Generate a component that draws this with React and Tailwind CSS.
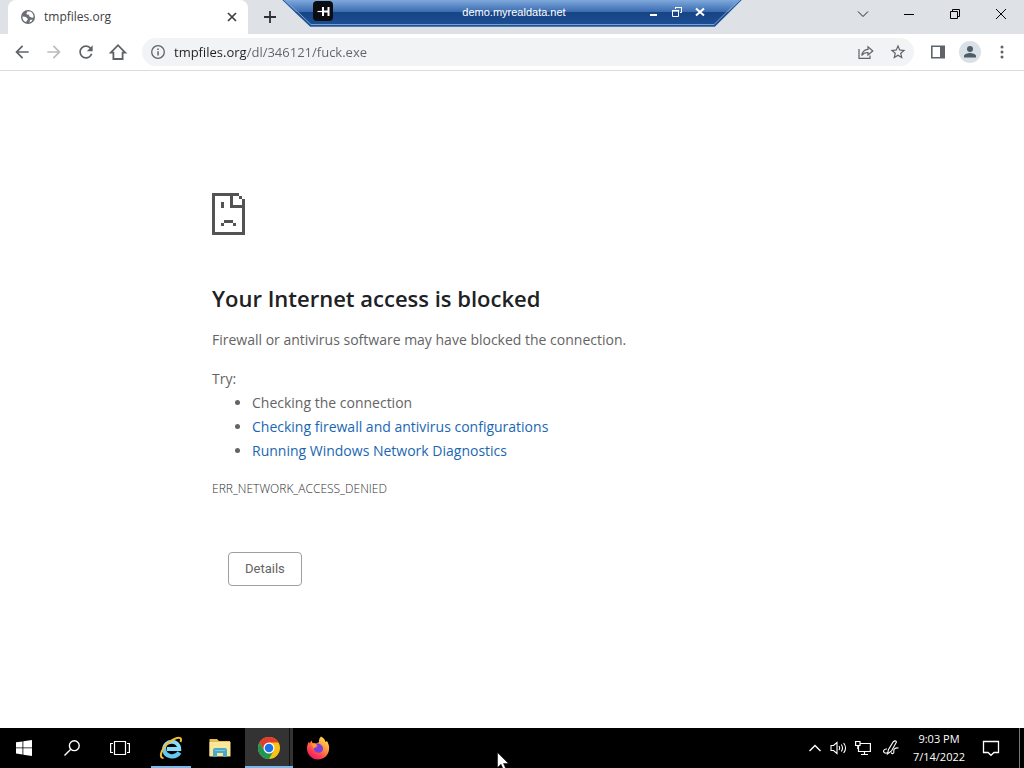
import React from "react";

function IconButton({ label, className = "", children }) {
  return (
    <button type="button" aria-label={label} className={`flex shrink-0 items-center justify-center ${className}`}>
      {children}
    </button>
  );
}

function Material({ d, className = "size-5 fill-[#5f6368]" }) {
  return (
    <svg viewBox="0 0 24 24" className={className} aria-hidden="true">
      <path d={d} />
    </svg>
  );
}

function SessionBar() {
  return (
    <div className="absolute left-1/2 top-0 h-[27px] w-[460px] -translate-x-1/2">
      <svg viewBox="0 0 460 27" className="absolute inset-0 size-full" aria-hidden="true">
        <defs>
          <linearGradient id="barFill" x1="0" y1="0" x2="0" y2="1">
            <stop offset="0" stopColor="#7fa9dc" />
            <stop offset="0.45" stopColor="#3a6bb0" />
            <stop offset="0.46" stopColor="#174585" />
            <stop offset="1" stopColor="#1c4f96" />
          </linearGradient>
        </defs>
        <path d="M0 0H460L433 26.500H28Z" fill="url(#barFill)" />
        <path d="M1 0L28.500 26H433L459 0" fill="none" stroke="#1e5a9c" />
        <path d="M3 0L29 24.500H432L457 0" fill="none" stroke="#7f9fcc" />
      </svg>
      <div className="relative flex h-6 items-center pl-[31px] pr-8">
        <IconButton label="Pin the connection bar" className="mb-0.5 size-5 rounded-sm bg-[#0b0d10]">
          <svg viewBox="0 0 20 20" className="size-5" fill="none" stroke="#fff" strokeWidth="2" aria-hidden="true">
            <path d="M4.500 10.500H9" strokeWidth="1.200" />
            <path d="M10 6V15M10 10.500H15M15.500 6V15" />
          </svg>
        </IconButton>
        <span className="flex-1 pl-[52px] text-center font-['Liberation_Sans',sans-serif] text-[11px] leading-4 text-white">
          demo.myrealdata.net
        </span>
        <div className="flex gap-0.5">
          <IconButton label="Minimize session" className="h-6 w-[21px]">
            <svg viewBox="0 0 12 12" className="size-3" aria-hidden="true"><path d="M2 8H9V10H2Z" fill="#fff" /></svg>
          </IconButton>
          <IconButton label="Restore session" className="h-6 w-[21px]">
            <svg viewBox="0 0 12 12" className="size-3" fill="none" stroke="#fff" aria-hidden="true">
              <path d="M1.500 5H7.500V10.500H1.500ZM1 4.500H8M4.500 3V1.500H10.500V6.500H9M4 1.500H11" />
            </svg>
          </IconButton>
          <IconButton label="Close session" className="h-6 w-[21px]">
            <svg viewBox="0 0 12 12" className="size-3" fill="none" stroke="#fff" strokeWidth="2" aria-hidden="true">
              <path d="M2 2.500L10 9.500M10 2.500L2 9.500" />
            </svg>
          </IconButton>
        </div>
      </div>
    </div>
  );
}

function TabStrip() {
  return (
    <div className="relative flex h-[34px] bg-[#dee1e6]">
      <div className="ml-2 flex w-60 items-center rounded-t-lg bg-white pl-3 pr-2">
        <svg viewBox="0 0 16 16" className="size-4 shrink-0" aria-hidden="true">
          <circle cx="8" cy="8" r="7" fill="#6b6f73" />
          <path d="M2.500 7.500C4.500 7.200 6.500 8 7.500 9.500C8.500 10.500 7 11 6.500 12.500L5.500 13C3.500 12 2.200 10 2.500 7.500ZM7 2.500H10.500C12.500 3.500 13.500 5.500 13.600 8C12.500 9.500 11.500 8.500 10.500 8C9 7.500 8.500 6.800 9.500 6C8.500 5.500 7 6 6.500 5C6 4 7.500 3.500 7 2.500ZM10 11L12.500 10.500C12 12 11 13 9.500 13.500Z" fill="#fff" />
        </svg>
        <span className="ml-2 flex-1 text-xs text-[#3c4043]">tmpfiles.org</span>
        <IconButton label="Close tab" className="size-4">
          <svg viewBox="0 0 16 16" className="size-4" stroke="#3c4043" strokeWidth="1.700" aria-hidden="true">
            <path d="M4 4L12 12M12 4L4 12" />
          </svg>
        </IconButton>
      </div>
      <IconButton label="New tab" className="ml-2 w-7">
        <svg viewBox="0 0 16 16" className="size-4" stroke="#303134" strokeWidth="1.800" aria-hidden="true">
          <path d="M8 2V14M2 8H14" />
        </svg>
      </IconButton>
      <div className="ml-auto flex h-7">
        <IconButton label="Search tabs" className="w-[46px]">
          <svg viewBox="0 0 12 12" className="size-3" fill="none" stroke="#202124" aria-hidden="true"><path d="M1 3.500L6 8.500L11 3.500" /></svg>
        </IconButton>
        <IconButton label="Minimize" className="w-[46px]">
          <svg viewBox="0 0 10 10" className="size-2.5" stroke="#000" aria-hidden="true"><path d="M0 5.500H10" /></svg>
        </IconButton>
        <IconButton label="Restore" className="w-[46px]">
          <svg viewBox="0 0 10 10" className="size-2.5" fill="none" stroke="#000" aria-hidden="true">
            <path d="M0.500 2.500H7.500V9.500H0.500ZM2.500 2.500V0.500H9.500V7.500H7.500" />
          </svg>
        </IconButton>
        <IconButton label="Close" className="w-[46px]">
          <svg viewBox="0 0 10 10" className="size-2.5" stroke="#000" aria-hidden="true"><path d="M0 0L10 10M10 0L0 10" /></svg>
        </IconButton>
      </div>
      <SessionBar />
    </div>
  );
}

function Toolbar() {
  return (
    <div className="flex h-[37px] items-center border-b border-[#dadce0] bg-white px-1.5">
      <IconButton label="Back" className="h-8 w-8">
        <Material d="M20 11H7.830l5.590-5.590L12 4l-8 8 8 8 1.410-1.410L7.830 13H20v-2z" />
      </IconButton>
      <IconButton label="Forward" className="h-8 w-8">
        <Material className="size-5 fill-[#babcbe]" d="M12 4l-1.410 1.410L16.170 11H4v2h12.170l-5.580 5.590L12 20l8-8z" />
      </IconButton>
      <IconButton label="Reload" className="h-8 w-8">
        <Material d="M17.650 6.350C16.200 4.900 14.210 4 12 4c-4.420 0-7.990 3.580-7.990 8s3.570 8 7.990 8c3.730 0 6.840-2.550 7.730-6h-2.080c-.82 2.330-3.040 4-5.650 4-3.310 0-6-2.690-6-6s2.690-6 6-6c1.660 0 3.140.69 4.220 1.780L13 11h7V4l-2.350 2.350z" />
      </IconButton>
      <IconButton label="Home" className="h-8 w-8">
        <svg viewBox="0 0 20 20" className="size-5" fill="none" stroke="#5f6368" strokeWidth="1.800" aria-hidden="true">
          <path d="M2.800 10.600L10 3.200L17.200 10.600H14.600V17H5.400V10.600Z" />
        </svg>
      </IconButton>
      <div className="mx-2 flex h-7 flex-1 items-center rounded-full bg-[#f1f3f4]">
        <IconButton label="View site information" className="h-7 w-8">
          <svg viewBox="0 0 16 16" className="size-4" aria-hidden="true">
            <circle cx="8" cy="8" r="6.300" fill="none" stroke="#5f6368" strokeWidth="1.300" />
            <path d="M7.300 7.200H8.800V11.500H7.300ZM7.300 4.500H8.800V6H7.300Z" fill="#5f6368" />
          </svg>
        </IconButton>
        <input
          type="text"
          aria-label="Address"
          defaultValue="tmpfiles.org/dl/346121/fuck.exe"
          spellCheck="false"
          className="h-7 min-w-0 flex-1 bg-[linear-gradient(to_right,#202124_72px,#5f6368_72px)] bg-clip-text text-[13px] text-transparent caret-black outline-none"
        />
        <IconButton label="Share this page" className="h-7 w-8">
          <svg viewBox="0 0 16 16" className="size-4" fill="none" stroke="#5f6368" strokeWidth="1.200" aria-hidden="true">
            <path d="M1 5V14.400H12V11.500" />
            <path d="M3.800 11.500C4.300 8 6.500 5.700 10 5.400V2.800L14.800 7L10 11V8.500C7.300 8.400 5.300 9.300 3.800 11.500Z" />
          </svg>
        </IconButton>
        <IconButton label="Bookmark this page" className="h-7 w-8">
          <Material className="size-[18px] fill-[#5f6368]" d="M22 9.240l-7.190-.62L12 2 9.190 8.630 2 9.240l5.460 4.730L5.820 21 12 17.270 18.180 21l-1.630-7.030L22 9.240zM12 15.400l-3.760 2.270 1-4.280-3.320-2.880 4.380-.38L12 6.100l1.710 4.040 4.380.38-3.320 2.880 1 4.280L12 15.400z" />
        </IconButton>
      </div>
      <IconButton label="Side panel" className="h-8 w-8">
        <svg viewBox="0 0 14 14" className="size-3.5" aria-hidden="true">
          <path d="M0.800 1.300H13.200V12.700H0.800Z" fill="none" stroke="#5f6368" strokeWidth="1.600" />
          <path d="M9 1H13.500V13H9Z" fill="#5f6368" />
        </svg>
      </IconButton>
      <IconButton label="Profile" className="h-8 w-8">
        <svg viewBox="0 0 22 22" className="size-[22px]" aria-hidden="true">
          <circle cx="11" cy="11" r="11" fill="#dae1e6" />
          <circle cx="11" cy="8" r="3" fill="#4f5b66" />
          <path d="M5 16.500V15C5 13 9 12 11 12S17 13 17 15V16.500Z" fill="#4f5b66" />
        </svg>
      </IconButton>
      <IconButton label="Menu" className="h-8 w-8">
        <svg viewBox="0 0 16 16" className="size-4 fill-[#5f6368]" aria-hidden="true">
          <circle cx="8" cy="3" r="1.500" /><circle cx="8" cy="8" r="1.500" /><circle cx="8" cy="13" r="1.500" />
        </svg>
      </IconButton>
    </div>
  );
}

function ErrorPage() {
  return (
    <main className="flex-1 bg-white px-6 pt-[122px] text-[#646464]">
      <div className="mx-auto max-w-[600px]">
        <svg viewBox="0 0 11 14" className="h-[42px] w-[33px] fill-[#535353]" shapeRendering="crispEdges" aria-hidden="true">
          <path d="M0 0H9V1H7V4H11V5H6V1H1V13H10V5H11V14H0ZM9 1H10V2H9ZM10 2H11V5H10ZM3 3H4V5H3ZM4 9H7V10H4ZM3 10H4V11H3ZM7 10H8V11H7Z" />
        </svg>
        <h1 className="mt-12 text-[22px] font-semibold leading-[30px] text-[#202124]">Your Internet access is blocked</h1>
        <p className="mt-[15px] text-sm leading-6">Firewall or antivirus software may have blocked the connection.</p>
        <p className="mt-[15px] text-sm leading-6">Try:</p>
        <ul className="list-disc pl-10 text-sm leading-6">
          <li>Checking the connection</li>
          <li><a href="#firewall" className="text-[#1967b3]">Checking firewall and antivirus configurations</a></li>
          <li><a href="#diagnostics" className="text-[#1967b3]">Running Windows Network Diagnostics</a></li>
        </ul>
        <p className="mt-4 text-xs font-light leading-5 text-[#303030]">ERR_NETWORK_ACCESS_DENIED</p>
        <button type="button" className="ml-4 mt-[53px] block h-[34px] rounded border border-[#9aa0a6] px-4 font-['Roboto',sans-serif] text-[13px]">
          Details
        </button>
      </div>
    </main>
  );
}

function Taskbar() {
  return (
    <footer className="relative flex h-10 shrink-0 bg-black text-white">
      <IconButton label="Start" className="w-12">
        <svg viewBox="0 0 16 16" className="size-4 fill-white" aria-hidden="true">
          <path d="M0 2.300L6.500 1.400V7.500H0ZM7.300 1.300L16 0V7.500H7.300ZM0 8.300H6.500V14.500L0 13.600ZM7.300 8.300H16V16L7.300 14.700Z" />
        </svg>
      </IconButton>
      <IconButton label="Search" className="w-12">
        <svg viewBox="0 0 16 16" className="size-4" fill="none" stroke="#fff" strokeWidth="1.400" aria-hidden="true">
          <circle cx="10.300" cy="5.700" r="4.900" /><path d="M6.800 9.200L0.500 15.500" />
        </svg>
      </IconButton>
      <IconButton label="Task view" className="w-12">
        <svg viewBox="0 0 20 16" className="h-4 w-5" fill="none" stroke="#fff" strokeWidth="1.200" aria-hidden="true">
          <path d="M4.500 1.500H15.500V14.500H4.500ZM3 3.500H0.600V12.500H3M17 3.500H19.400V12.500H17" />
        </svg>
      </IconButton>
      <div className="ml-[3px] flex gap-px">
        <IconButton label="Internet Explorer" className="w-12 bg-[linear-gradient(#76b9ed,#76b9ed)] bg-[length:40px_2px] bg-bottom bg-no-repeat">
          <svg viewBox="0 0 24 24" className="size-6" fill="none" aria-hidden="true">
            <path d="M5 13.500C5 3.500 20 3 20.300 13H8" stroke="#8bdcf8" strokeWidth="3.800" />
            <path d="M5.200 12.500C5 21.500 16.500 22.500 20.500 16.500" stroke="#63c8f2" strokeWidth="4.200" />
            <path d="M4.500 22C-1.500 22 3.500 10.500 11 5.500C18 0.500 24 0 21.500 6" stroke="#f5bd32" strokeWidth="2" />
          </svg>
        </IconButton>
        <IconButton label="File Explorer" className="w-12">
          <svg viewBox="0 0 24 24" className="size-6" aria-hidden="true">
            <path d="M1.500 3H9L11 5H22V20H1.500Z" fill="#e5bd55" />
            <path d="M1.500 6H22.500V20.500H1.500Z" fill="#fbe69a" />
            <path d="M5 21V14Q5 12 7 12H17Q19 12 19 14V21H15V17H9V21Z" fill="#4aa9c9" />
            <path d="M7 14H17V15H7Z" fill="#75c7dc" />
          </svg>
        </IconButton>
        <IconButton label="Google Chrome" className="w-12 border-b-2 border-[#76b9ed] bg-[linear-gradient(to_right,#333_44px,#111_44px,#111_45px,#333_45px)]">
          <svg viewBox="0 0 24 24" className="mt-0.5 size-6" aria-hidden="true">
            <circle cx="12" cy="12" r="11" fill="#fbc116" />
            <path d="M2.470 6.500A11 11 0 0 1 21.530 6.500H12L7.240 9.250V14.750Z" fill="#e33b2e" />
            <path d="M2.470 6.500L7.240 14.750L12 17.500L16.760 14.750L12 23A11 11 0 0 1 2.470 6.500Z" fill="#219653" />
            <circle cx="12" cy="12" r="5.500" fill="#fff" />
            <circle cx="12" cy="12" r="4.300" fill="#1a73e8" />
          </svg>
        </IconButton>
        <IconButton label="Firefox" className="w-12">
          <svg viewBox="0 0 24 24" className="size-6" aria-hidden="true">
            <defs>
              <linearGradient id="fox" x1="0.900" y1="0" x2="0.200" y2="1">
                <stop offset="0" stopColor="#fff14f" /><stop offset="0.400" stopColor="#ff9640" />
                <stop offset="0.750" stopColor="#ff3d4f" /><stop offset="1" stopColor="#e2107a" />
              </linearGradient>
            </defs>
            <path d="M15 0.500C18 2 19 4 19.500 6L21 5C23 8.500 23.500 11 23 14C22 20 17.500 23.500 12 23.500C5.500 23.500 1 18.500 1 12.500C1 9.500 1.800 7.500 3 5.500L3.500 7.500L5.500 4.500L6.500 7L10.500 7.500L13 6C12.700 4 13.500 2 15 0.500Z" fill="url(#fox)" />
            <path d="M8.500 8.500C11 6 16.500 8 17 12C17.500 16 13 18 10 16C8 15 7.500 13 8 12L11.500 11Z" fill="#7a3fe0" />
            <path d="M5.500 8C8 7 10 7.500 11.500 9.500C9.500 10 9 11.500 7.500 12.500Z" fill="#ff9a34" />
          </svg>
        </IconButton>
      </div>
      <div className="ml-auto flex">
        <IconButton label="Show hidden icons" className="w-6">
          <svg viewBox="0 0 14 14" className="size-3.5" fill="none" stroke="#fff" strokeWidth="1.400" aria-hidden="true"><path d="M1.500 10L7 4.500L12.500 10" /></svg>
        </IconButton>
        <IconButton label="Volume" className="w-6">
          <svg viewBox="0 0 18 16" className="h-4 w-[18px]" fill="none" stroke="#fff" strokeWidth="1.100" aria-hidden="true">
            <path d="M1 5.500H3.500L7 2.500V13.500L3.500 10.500H1ZM9 6Q10.300 8 9 10M11.300 4.500Q13.700 8 11.300 11.500M13.600 3Q17.500 8 13.600 13" />
          </svg>
        </IconButton>
        <IconButton label="Network" className="w-6">
          <svg viewBox="0 0 16 16" className="size-4" fill="none" stroke="#fff" strokeWidth="1.200" aria-hidden="true">
            <path d="M5 3.500H15.400V11.500H3.500V6M9.500 11.500V14.500M6 14.500H13M0.600 1.500H5V5.500H0.600ZM2.800 5.500V9" />
          </svg>
        </IconButton>
        <IconButton label="Windows Ink Workspace" className="w-8">
          <svg viewBox="0 0 16 16" className="size-4" fill="none" stroke="#fff" strokeWidth="1.100" aria-hidden="true">
            <path d="M4 9C1 8.500 -0.500 11.500 1.500 12.800C3 13.500 4 13 5 12.500" />
            <path d="M4.500 14L5.500 9.500L10.500 1.500Q12.500 0 13.500 2L8.500 11Z" />
            <path d="M8 12.500C9 14.500 11.500 13.500 10.800 11C10.500 9 12.500 7.500 15.500 8" />
          </svg>
        </IconButton>
        <button type="button" className="flex w-16 flex-col items-center justify-center text-[11px] leading-[18px] tabular-nums">
          <span>9:03 PM</span>
          <span>7/14/2022</span>
        </button>
        <IconButton label="Notifications" className="w-10">
          <svg viewBox="0 0 18 18" className="size-[18px]" fill="none" stroke="#fff" strokeWidth="1.300" aria-hidden="true">
            <path d="M1.500 2.500H16.500V13.500H12L9 16.300L6 13.500H1.500Z" />
          </svg>
        </IconButton>
        <button type="button" aria-label="Show desktop" className="ml-2 w-[5px] border-l border-[#777]" />
      </div>
      <svg viewBox="0 0 12 19" className="absolute left-[497px] top-6 h-[19px] w-3" aria-hidden="true">
        <path d="M0.500 0.500V15.500L4 12.200L6.500 18L9 17L6.500 11.500H11.500Z" fill="#fff" stroke="#000" strokeWidth="0.500" />
      </svg>
    </footer>
  );
}

export default function App() {
  return (
    <div className="flex min-h-screen flex-col overflow-hidden font-['Open_Sans',sans-serif]">
      <header>
        <TabStrip />
        <Toolbar />
      </header>
      <ErrorPage />
      <Taskbar />
    </div>
  );
}
